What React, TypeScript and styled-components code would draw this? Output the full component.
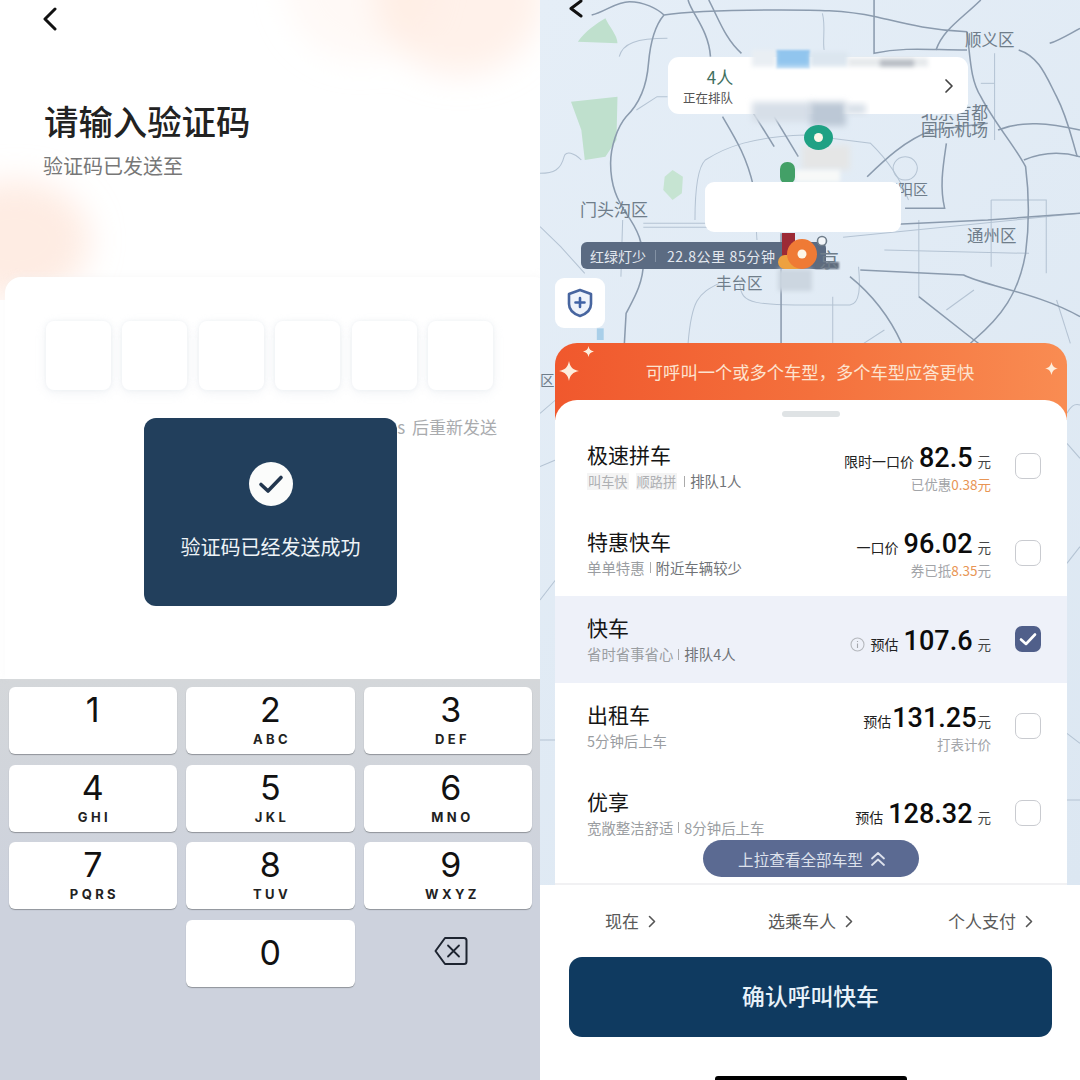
import React from "react";
import styled, { createGlobalStyle } from "styled-components";

const Global = createGlobalStyle`
  html, body { margin: 0; padding: 0; background: #fff; }
  body { font-family: "Noto Sans CJK SC", "Noto Sans", sans-serif; }
  * { box-sizing: border-box; }
`;

const Page = styled.div`
  width: 1080px;
  height: 1080px;
  display: grid;
  grid-template-columns: 540px 540px;
  overflow: hidden;
`;

/* ---------- left phone ---------- */
const LeftPanel = styled.section`
  position: relative;
  display: flex;
  flex-direction: column;
  height: 1080px;
  overflow: hidden;
  background: #fff;
`;
const Glow = styled.svg`
  position: absolute;
  inset: 0;
  width: 540px;
  height: 300px;
`;
const Header = styled.header`
  position: relative;
  height: 277px;
  padding: 7px 0 0 42px;
  display: flex;
  flex-direction: column;
`;
const BackIcon = styled.svg`
  display: block;
  width: 15px;
  height: 24px;
`;
const Title = styled.h1`
  margin: 65px 0 0 2px;
  font-size: 34.4px;
  line-height: 48px;
  font-weight: 500;
  color: #222;
`;
const Subtitle = styled.p`
  margin: 8px 0 0 1px;
  font-size: 20px;
  line-height: 28px;
  color: #777;
`;
const CodeCard = styled.div`
  position: relative;
  flex: 1;
  margin-left: 5px;
  margin-right: -10px;
  background: #fff;
  border-radius: 16px 16px 0 0;
  box-shadow: 0 -2px 6px rgba(240, 240, 240, 0.35);
  padding-top: 44px;
`;
const CodeRow = styled.div`
  display: flex;
  gap: 11.4px;
  margin-left: 41px;
`;
const CodeBox = styled.div`
  width: 65px;
  height: 69px;
  border-radius: 8px;
  background: #fff;
  box-shadow: 0 3px 12px rgba(222, 228, 234, 0.4), 0 0 4px rgba(225, 230, 235, 0.45);
`;
const ResendRow = styled.div`
  display: flex;
  justify-content: flex-end;
  margin-top: 24px;
  padding-right: 53px;
  font-size: 17px;
  line-height: 26px;
  word-spacing: 3px;
  color: #a9abae;
`;
const Toast = styled.div`
  position: absolute;
  left: 144px;
  top: 418px;
  width: 253px;
  height: 188px;
  background: #223f5c;
  border-radius: 12px;
  display: flex;
  flex-direction: column;
  align-items: center;
  padding-top: 44px;
  color: #eef3f7;
`;
const ToastText = styled.div`
  margin-top: 27px;
  font-size: 20px;
  line-height: 28px;
`;
const Keyboard = styled.div`
  height: 401px;
  padding: 8px 8px 0 8.5px;
  background: linear-gradient(#d4d7da 0%, #cdd2dd 55%, #cdd2dd 100%);
  display: grid;
  grid-template-columns: repeat(3, 168.5px);
  grid-auto-rows: 67px;
  column-gap: 9px;
  row-gap: 10.5px;
`;
const Key = styled.div<{ $center?: boolean; $blank?: boolean }>`
  background: ${(p) => (p.$blank ? "transparent" : "#fff")};
  border-radius: 6px;
  box-shadow: ${(p) => (p.$blank ? "none" : "0 1px 1px #8f9399")};
  display: flex;
  flex-direction: column;
  align-items: center;
  justify-content: ${(p) => (p.$center ? "center" : "flex-start")};
  color: #111;
  font-family: Inter, Roboto, sans-serif;
  &:nth-child(3n) {
    padding-left: 6px;
  }
`;
const KeyDigit = styled.span`
  font-size: 34px;
  line-height: 46px;
  font-weight: 400;
`;
const KeyLetters = styled.span`
  margin-top: -2px;
  font-size: 13px;
  line-height: 16px;
  font-weight: 700;
  letter-spacing: 3.4px;
  margin-right: -3.4px;
  color: #222;
`;
const DeleteIcon = styled.svg`
  width: 34px;
  height: 30px;
  margin-top: -5px;
`;

/* ---------- right phone ---------- */
const RightPanel = styled.section`
  display: flex;
  flex-direction: column;
  height: 1080px;
`;
const MapArea = styled.div`
  position: relative;
  flex: 1;
  min-height: 0;
  display: flex;
  flex-direction: column;
  justify-content: flex-end;
  padding: 0 13px 0 15px;
  background: linear-gradient(135deg, #e5eef7, #dce7f2);
  overflow: hidden;
`;
const RoadSvg = styled.svg`
  position: absolute;
  inset: 0;
  width: 540px;
  height: 885px;
  filter: blur(0.5px);
`;
const MapOverlay = styled.svg`
  position: absolute;
  inset: 0;
  width: 540px;
  height: 885px;
`;
const MapLabel = styled.span<{ $x: number; $y: number; $s?: number }>`
  position: absolute;
  left: ${(p) => p.$x}px;
  top: ${(p) => p.$y}px;
  font-size: ${(p) => p.$s ?? 16.5}px;
  line-height: 17px;
  color: #6f7d8a;
  white-space: nowrap;
`;
const QueueCard = styled.div`
  position: absolute;
  left: 128px;
  top: 57px;
  width: 300px;
  height: 57px;
  background: #fff;
  border-radius: 11px;
  padding: 8px 0 0 15px;
  display: flex;
  flex-direction: column;
  align-items: flex-start;
`;
const QueueCount = styled.div`
  width: 51px;
  text-align: center;
  font-size: 17px;
  line-height: 24px;
  color: #41705f;
  padding-left: 23px;
  white-space: nowrap;
`;
const QueueText = styled.div`
  font-size: 12.5px;
  line-height: 17px;
  color: #555;
`;
const QueueChevron = styled.svg`
  position: absolute;
  right: 14px;
  top: 21px;
  width: 10px;
  height: 16px;
`;
const RouteChip = styled.div`
  position: absolute;
  left: 41px;
  top: 242px;
  width: 245px;
  height: 27px;
  border-radius: 6px;
  background: #5b6b82;
  color: #e3e8ef;
  font-size: 14px;
  display: flex;
  align-items: center;
  padding-left: 9px;
`;
const ChipDivider = styled.i`
  width: 1px;
  height: 12px;
  background: #8391a4;
  margin: 0 9px;
`;
const ChipStats = styled.span`
  margin-left: 2px;
  letter-spacing: 0.6px;
  white-space: nowrap;
`;
const ShieldButton = styled.div`
  position: absolute;
  left: 15px;
  top: 278px;
  width: 50px;
  height: 50px;
  border-radius: 9px;
  background: #fff;
  display: flex;
  align-items: center;
  justify-content: center;
`;
const Sheet = styled.div`
  position: relative;
  display: flex;
  flex-direction: column;
`;
const Banner = styled.div`
  position: relative;
  height: 77px;
  margin-bottom: -20px;
  border-radius: 22px 22px 0 0;
  background: linear-gradient(90deg, #f0582d 0%, #f4703c 50%, #f98c52 100%);
  color: #fde3cf;
  font-size: 17.3px;
  line-height: 58px;
  text-align: center;
  padding-right: 2px;
`;
const Spark = styled.svg<{ $x: number; $y: number; $s: number }>`
  position: absolute;
  left: ${(p) => p.$x}px;
  top: ${(p) => p.$y}px;
  width: ${(p) => p.$s}px;
  height: ${(p) => p.$s}px;
`;
const ListCard = styled.div`
  position: relative;
  height: 485px;
  background: #fff;
  border-radius: 22px 22px 0 0;
  border-bottom: 2px solid #f1f1f3;
  padding-top: 23px;
`;
const Handle = styled.div`
  position: absolute;
  left: 50%;
  top: 11px;
  width: 58px;
  height: 6px;
  margin-left: -29px;
  border-radius: 3px;
  background: #dfe3e5;
`;
const Row = styled.div<{ $active?: boolean }>`
  height: 86.6px;
  display: flex;
  align-items: center;
  padding: 0 26px 0 32px;
  background: ${(p) => (p.$active ? "#eef1f9" : "transparent")};
`;
const RowInfo = styled.div`
  flex: 1;
  display: flex;
  flex-direction: column;
  padding-bottom: 1px;
`;
const RowTitle = styled.div`
  font-size: 21px;
  line-height: 30px;
  color: #151515;
`;
const RowSub = styled.div`
  display: flex;
  align-items: center;
  font-size: 14.4px;
  line-height: 22px;
  margin-top: 1px;
  color: #9a9da1;
  white-space: nowrap;
`;
const SubStrong = styled.span`
  color: #6f7276;
`;
const SubBar = styled.i<{ $flush?: boolean }>`
  width: 1px;
  height: 11px;
  background: #aaa;
  margin: 0 5px 0 ${(p) => (p.$flush ? 0 : 5)}px;
`;
const Tag = styled.span`
  background: #f4f4f4;
  color: #aeb0b3;
  font-size: 13.2px;
  line-height: 17px;
  padding: 0 1px;
  margin-right: 7px;
`;
const PriceCol = styled.div<{ $hasNote?: boolean }>`
  display: flex;
  flex-direction: column;
  align-items: flex-end;
  margin-right: 24px;
  padding-top: ${(p) => (p.$hasNote ? 4 : 6)}px;
`;
const PriceLine = styled.div<{ $tight?: boolean }>`
  display: flex;
  align-items: baseline;
  gap: ${(p) => (p.$tight ? 1 : 5)}px;
  color: #222;
  font-size: 14px;
  line-height: 30px;
`;
const InfoIcon = styled.svg`
  width: 15px;
  height: 15px;
  align-self: center;
  margin-right: 1px;
  margin-top: 5px;
`;
const Amount = styled.span`
  font-family: Roboto, sans-serif;
  font-size: 27px;
  font-weight: 500;
  color: #0c0c0c;
`;
const Unit = styled.span`
  font-size: 13.5px;
  color: #444;
`;
const Note = styled.div`
  font-size: 13.5px;
  line-height: 20px;
  margin-top: -2px;
  color: #a2a4a8;
`;
const NoteHot = styled.span`
  color: #e89554;
`;
const Check = styled.div<{ $on?: boolean }>`
  width: 26px;
  height: 26px;
  border-radius: 7px;
  border: ${(p) => (p.$on ? "none" : "1.5px solid #c9cbd0")};
  background: ${(p) => (p.$on ? "#505f8a" : "#fff")};
  display: flex;
  align-items: center;
  justify-content: center;
`;
const Pill = styled.div`
  position: absolute;
  left: 148px;
  bottom: 6px;
  width: 216px;
  height: 37px;
  border-radius: 19px;
  background: #5b6a92;
  color: #dde1ec;
  font-size: 15.6px;
  display: flex;
  align-items: center;
  justify-content: center;
  gap: 7px;
  padding-left: 2px;
`;
const Footer = styled.footer`
  position: relative;
  height: 195px;
  background: #fff;
  padding: 21px 28px 0 29px;
`;
const OptionRow = styled.div`
  display: flex;
  padding-left: 36px;
  height: 30px;
`;
const Option = styled.div<{ $ml?: number }>`
  display: flex;
  align-items: center;
  gap: 9px;
  margin-left: ${(p) => p.$ml ?? 0}px;
  font-size: 17px;
  line-height: 30px;
  color: #595959;
`;
const ConfirmButton = styled.button`
  display: block;
  width: 483px;
  height: 80px;
  margin-top: 21px;
  padding: 0 0 4px;
  border: none;
  border-radius: 13px;
  background: #0f3a60;
  color: #e8f2fa;
  font-family: inherit;
  font-size: 22.8px;
  font-weight: 500;
`;
const HomeBar = styled.div`
  position: absolute;
  left: 175px;
  bottom: 0;
  width: 192px;
  height: 4px;
  border-radius: 3px 3px 0 0;
  background: #000;
`;

/* ---------- drawings ---------- */
const majorRoads = [
  "M150 45C190 35 220 5 260 5C300 5 340 25 360 45C420 35 560 30 700 30C800 30 880 30 975 50C1040 65 1120 90 1240 95",
  "M360 45C335 75 320 130 315 190C310 260 290 310 250 350C225 380 205 440 205 490C205 560 225 600 250 640C285 690 300 730 300 790C300 850 270 900 250 940L245 1030",
  "M970 0L970 160C1060 140 1130 150 1240 150",
  "M1240 95C1250 180 1250 240 1280 290C1320 370 1380 440 1410 500C1420 580 1420 680 1410 760C1390 880 1340 950 1260 1020L1230 1050",
  "M1330 390C1400 360 1480 370 1568 390",
  "M1405 480C1450 460 1500 450 1568 470",
  "M950 530C1000 480 1060 420 1140 390L1300 370",
  "M1180 430C1170 500 1160 560 1175 625L1060 625",
  "M930 810L1230 825C1300 860 1450 880 1568 950",
  "M900 830C960 880 1010 940 1050 1030",
  "M1100 890L1260 1020L1300 1050",
  "M700 700L700 1030",
  "M1568 640L1300 660L880 680",
  "M530 350C570 420 600 470 620 560",
  "M620 340L680 440",
  "M680 350L750 470",
  "M430 0C440 40 490 90 495 170",
  "M490 0C520 60 540 120 585 160",
  "M1280 0C1220 60 1170 90 1150 150",
  "M1390 150C1450 170 1470 230 1500 290C1530 350 1540 400 1560 470",
  "M1480 130C1510 120 1540 100 1568 85",
];
const minorRoads = [
  "M450 660C450 560 460 500 480 480C540 440 620 410 770 405L960 430C1000 470 1040 520 1070 600",
  "M580 850C585 920 620 915 900 915C930 910 930 860 925 800",
  "M300 670L700 670",
  "M300 682L700 682",
  "M230 170C240 130 280 115 370 115",
  "M280 330L340 290L370 290",
  "M620 560L630 720",
  "M520 850C460 880 440 900 430 1030",
  "M1000 750L1420 760",
  "M880 712L1568 640",
  "M1310 600L1470 600L1470 820",
  "M1310 600L1310 800",
  "M1100 660L1100 890",
  "M1060 470A35 35 0 1 0 1061 470Z",
  "M820 40C830 80 820 120 825 150",
  "M1320 160L1320 420",
  "M1280 250L1320 250",
  "M0 520C40 520 60 510 70 470C75 450 100 460 120 480",
  "M240 660L235 830",
  "M0 680L60 740L130 820",
  "M1180 930L1260 870",
  "M850 890L850 1030",
  "M940 1030L1000 990",
  "M1500 900L1540 1030",
  "M0 1240L45 1200",
  "M0 1400L45 1380",
  "M1530 1240C1540 1220 1550 1210 1568 1215",
  "M1530 1330L1568 1375",
  "M1530 1690L1568 1640",
  "M0 1800L45 1740",
  "M0 2220L45 2220",
  "M1530 2200L1568 2230",
  "M1530 2400L1568 2400",
];
/* smeared, censored parts of the map: x, y, w, h, colour, blur filter */
const smears: [number, number, number, number, string, string][] = [
  [236, 50, 34, 19, "#91c5ee", "b1"],
  [212, 50, 24, 18, "#e9eef3", "b2"],
  [270, 52, 38, 16, "#dce6ef", "b2"],
  [308, 58, 80, 10, "#e6e9ec", "b2"],
  [340, 60, 34, 8, "#b4b9c1", "b2"],
  [210, 68, 180, 36, "#fff", "b3"],
  [212, 102, 60, 20, "#d7dfe8", "b3"],
  [270, 102, 36, 24, "#bcc8d6", "b3"],
  [306, 104, 20, 10, "#d7dfe8", "b3"],
  [262, 145, 48, 25, "#e5e6e6", "b3"],
  [255, 170, 45, 12, "#f8f9f8", "b2"],
  [238, 269, 34, 22, "#ccd6e0", "b2"],
  [275, 262, 24, 7, "#5f6c7d", "b1"],
];

const Back: React.FC = () => (
  <BackIcon viewBox="0 0 15 24">
    <path d="M13 2L3 12l10 10" fill="none" stroke="#111" strokeWidth="3" strokeLinecap="round" strokeLinejoin="round" />
  </BackIcon>
);
const SmallChevron = () => (
  <svg width="8" height="13" viewBox="0 0 8 13">
    <path d="M1.5 1.5L6.5 6.5L1.5 11.5" fill="none" stroke="#555" strokeWidth="1.6" strokeLinecap="round" strokeLinejoin="round" />
  </svg>
);
const SparkShape: React.FC<{ x: number; y: number; s: number }> = ({ x, y, s }) => (
  <Spark $x={x} $y={y} $s={s} viewBox="0 0 20 20">
    <path d="M10 0C11 6 14 9 20 10C14 11 11 14 10 20C9 14 6 11 0 10C6 9 9 6 10 0Z" fill="#fdeedd" />
  </Spark>
);
const Tick = () => (
  <svg width="18" height="14" viewBox="0 0 18 14">
    <path d="M2 7.5L7 12L16 2.5" fill="none" stroke="#fff" strokeWidth="2.6" strokeLinecap="round" strokeLinejoin="round" />
  </svg>
);

const keys = [
  ["1", ""], ["2", "ABC"], ["3", "DEF"],
  ["4", "GHI"], ["5", "JKL"], ["6", "MNO"],
  ["7", "PQRS"], ["8", "TUV"], ["9", "WXYZ"],
];

type Ride = {
  title: string;
  sub: React.ReactNode;
  label?: string;
  info?: boolean;
  tight?: boolean;
  amount: string;
  note?: React.ReactNode;
  active?: boolean;
};
const rides: Ride[] = [
  {
    title: "极速拼车",
    sub: (
      <>
        <Tag>叫车快</Tag>
        <Tag>顺路拼</Tag>
        <SubBar $flush />
        <SubStrong>排队1人</SubStrong>
      </>
    ),
    label: "限时一口价",
    amount: "82.5",
    note: (
      <>
        已优惠<NoteHot>0.38元</NoteHot>
      </>
    ),
  },
  {
    title: "特惠快车",
    sub: (
      <>
        单单特惠
        <SubBar />
        <SubStrong>附近车辆较少</SubStrong>
      </>
    ),
    label: "一口价",
    amount: "96.02",
    note: (
      <>
        券已抵<NoteHot>8.35</NoteHot>元
      </>
    ),
  },
  {
    title: "快车",
    sub: (
      <>
        省时省事省心
        <SubBar />
        <SubStrong>排队4人</SubStrong>
      </>
    ),
    label: "预估",
    info: true,
    amount: "107.6",
    active: true,
  },
  { title: "出租车", sub: "5分钟后上车", label: "预估", tight: true, amount: "131.25", note: "打表计价" },
  {
    title: "优享",
    sub: (
      <>
        宽敞整洁舒适
        <SubBar />
        8分钟后上车
      </>
    ),
    label: "预估",
    amount: "128.32",
  },
];

export default function App() {
  return (
    <Page>
      <Global />
      <LeftPanel>
        <Glow viewBox="0 0 540 300">
          <defs>
            <filter id="glow" x="-40%" y="-40%" width="180%" height="180%">
              <feGaussianBlur stdDeviation="16" />
            </filter>
          </defs>
          <g filter="url(#glow)">
            <ellipse cx="360" cy="-15" rx="75" ry="75" fill="rgba(255,240,232,.4)" />
            <ellipse cx="460" cy="-8" rx="85" ry="83" fill="rgba(255,228,214,.5)" />
            <ellipse cx="15" cy="240" rx="75" ry="60" fill="rgba(253,226,212,.65)" />
          </g>
        </Glow>
        <Header>
          <Back />
          <Title>请输入验证码</Title>
          <Subtitle>验证码已发送至</Subtitle>
        </Header>
        <CodeCard>
          <CodeRow>
            {[0, 1, 2, 3, 4, 5].map((i) => (
              <CodeBox key={i} />
            ))}
          </CodeRow>
          <ResendRow>58s 后重新发送</ResendRow>
        </CodeCard>
        <Toast>
          <svg width="44" height="44" viewBox="0 0 44 44">
            <circle cx="22" cy="22" r="22" fill="#fbfcfb" />
            <path d="M12 22.5L19 29L32 15.5" fill="none" stroke="#22364e" strokeWidth="3.6" strokeLinecap="round" strokeLinejoin="round" />
          </svg>
          <ToastText>验证码已经发送成功</ToastText>
        </Toast>
        <Keyboard>
          {keys.map(([d, l]) => (
            <Key key={d}>
              <KeyDigit>{d}</KeyDigit>
              {l && <KeyLetters>{l}</KeyLetters>}
            </Key>
          ))}
          <Key $blank />
          <Key $center>
            <KeyDigit>0</KeyDigit>
          </Key>
          <Key $blank $center>
            <DeleteIcon viewBox="0 0 34 30">
              <path d="M11 2H30a2.5 2.5 0 0 1 2.5 2.5V25.5A2.5 2.5 0 0 1 30 28H11L1.5 15Z" fill="none" stroke="#1d2430" strokeWidth="2" strokeLinejoin="round" />
              <path d="M14 9.5L25 20.5M25 9.5L14 20.5" stroke="#1d2430" strokeWidth="1.8" strokeLinecap="round" />
            </DeleteIcon>
          </Key>
        </Keyboard>
      </LeftPanel>

      <RightPanel>
        <MapArea>
          <RoadSvg viewBox="0 0 1568 2655" preserveAspectRatio="none">
            <path d="M110 125C130 95 165 70 190 55C200 80 225 105 225 130Z" fill="#bfe0cd" />
            <path d="M90 305L225 290L222 420L190 470L130 480L120 390Z" fill="#bfe0cd" />
            <path d="M385 510L415 530L412 580L385 600L358 570L362 530Z" fill="#c6e4d2" />
            <path d="M165 985H185V1020H165Z" fill="#a9cfe9" />
            {minorRoads.map((d) => (
              <path key={d} d={d} fill="none" stroke="#b4c3d3" strokeWidth="3" />
            ))}
            {majorRoads.map((d) => (
              <path key={d} d={d} fill="none" stroke="#8b9bae" strokeWidth="4.5" />
            ))}
          </RoadSvg>

          <MapLabel $x={425} $y={31}>顺义区</MapLabel>
          <MapLabel $x={381} $y={104} $s={16.8}>
            北京首都
            <br />
            国际机场
          </MapLabel>
          <MapLabel $x={343} $y={180} $s={15}>朝阳区</MapLabel>
          <MapLabel $x={40} $y={200} $s={17}>门头沟区</MapLabel>
          <MapLabel $x={427} $y={227}>通州区</MapLabel>
          <MapLabel $x={176} $y={274} $s={15.5}>丰台区</MapLabel>
          <MapLabel $x={0} $y={371} $s={14.5}>区</MapLabel>

          <QueueCard>
            <QueueCount>4人</QueueCount>
            <QueueText>正在排队</QueueText>
            <QueueChevron viewBox="0 0 10 16">
              <path d="M2 2L8 8L2 14" fill="none" stroke="#444" strokeWidth="1.7" strokeLinecap="round" strokeLinejoin="round" />
            </QueueChevron>
          </QueueCard>
          <RouteChip>
            红绿灯少
            <ChipDivider />
            <ChipStats>22.8公里 85分钟</ChipStats>
          </RouteChip>

          <MapOverlay viewBox="0 0 540 885">
            <defs>
              <filter id="b1"><feGaussianBlur stdDeviation="0.8" /></filter>
              <filter id="b2" x="-20%" y="-40%" width="140%" height="180%"><feGaussianBlur stdDeviation="2" /></filter>
              <filter id="b3" x="-20%" y="-40%" width="140%" height="180%"><feGaussianBlur stdDeviation="3" /></filter>
            </defs>
            {smears.map(([x, y, w, h, c, f]) => (
              <rect key={`${x}-${y}`} x={x} y={y} width={w} height={h} fill={c} filter={`url(#${f})`} />
            ))}
            <rect x="240" y="162" width="15" height="22" rx="7" fill="#43a067" />
            <ellipse cx="278.5" cy="137.5" rx="14.5" ry="12.5" fill="#1fa184" />
            <circle cx="278.5" cy="137.5" r="4.5" fill="#fdf6e8" />
            <rect x="165" y="182" width="196" height="50" rx="9" fill="#fff" />
            <rect x="242" y="233" width="13" height="28" fill="#9c2a35" />
            <rect x="238" y="255" width="26" height="14" rx="7" fill="#eda13f" />
            <circle cx="262" cy="254" r="15" fill="#ef7a35" />
            <circle cx="262" cy="254" r="4.5" fill="#fdf6e8" />
            <circle cx="282" cy="241" r="4.5" fill="#f4f7fa" stroke="#6f7d8a" strokeWidth="1.6" />
            <path d="M41 1L31 8.5L41 16" fill="none" stroke="#111" strokeWidth="3" strokeLinecap="round" strokeLinejoin="round" />
          </MapOverlay>
          <MapLabel $x={279} $y={251} $s={20}>京</MapLabel>

          <ShieldButton>
            <svg width="26" height="30" viewBox="0 0 26 30">
              <path d="M13 2L24 6V16C24 22 19 26 13 28C7 26 2 22 2 16V6Z" fill="#eef3fb" stroke="#47659f" strokeWidth="2.6" strokeLinejoin="round" />
              <path d="M13 10V19M8.5 14.5H17.5" stroke="#3f62a5" strokeWidth="2.6" strokeLinecap="round" />
            </svg>
          </ShieldButton>

          <Sheet>
            <Banner>
              <SparkShape x={28} y={3} s={11} />
              <SparkShape x={4} y={18} s={20} />
              <SparkShape x={490} y={19} s={13} />
              可呼叫一个或多个车型，多个车型应答更快
            </Banner>
            <ListCard>
              <Handle />
              {rides.map((r) => (
                <Row key={r.title} $active={r.active}>
                  <RowInfo>
                    <RowTitle>{r.title}</RowTitle>
                    <RowSub>{r.sub}</RowSub>
                  </RowInfo>
                  <PriceCol $hasNote={!!r.note}>
                    <PriceLine $tight={r.tight}>
                      {r.info && (
                        <InfoIcon viewBox="0 0 15 15">
                          <circle cx="7.5" cy="7.5" r="6.5" fill="none" stroke="#b5b8bd" strokeWidth="1.1" />
                          <path d="M7.5 6.5V11M7.5 4V5" stroke="#a5a8ad" strokeWidth="1.1" />
                        </InfoIcon>
                      )}
                      <span>{r.label}</span>
                      <Amount>{r.amount}</Amount>
                      <Unit>元</Unit>
                    </PriceLine>
                    {r.note && <Note>{r.note}</Note>}
                  </PriceCol>
                  <Check $on={r.active}>{r.active && <Tick />}</Check>
                </Row>
              ))}
              <Pill>
                上拉查看全部车型
                <svg width="16" height="16" viewBox="0 0 16 16">
                  <path d="M2 7.5L8 2L14 7.5M2 14L8 8.5L14 14" fill="none" stroke="#dde1ec" strokeWidth="1.8" strokeLinecap="round" strokeLinejoin="round" />
                </svg>
              </Pill>
            </ListCard>
          </Sheet>
        </MapArea>
        <Footer>
          <OptionRow>
            <Option>现在<SmallChevron /></Option>
            <Option $ml={112}>选乘车人<SmallChevron /></Option>
            <Option $ml={95}>个人支付<SmallChevron /></Option>
          </OptionRow>
          <ConfirmButton>确认呼叫快车</ConfirmButton>
          <HomeBar />
        </Footer>
      </RightPanel>
    </Page>
  );
}
